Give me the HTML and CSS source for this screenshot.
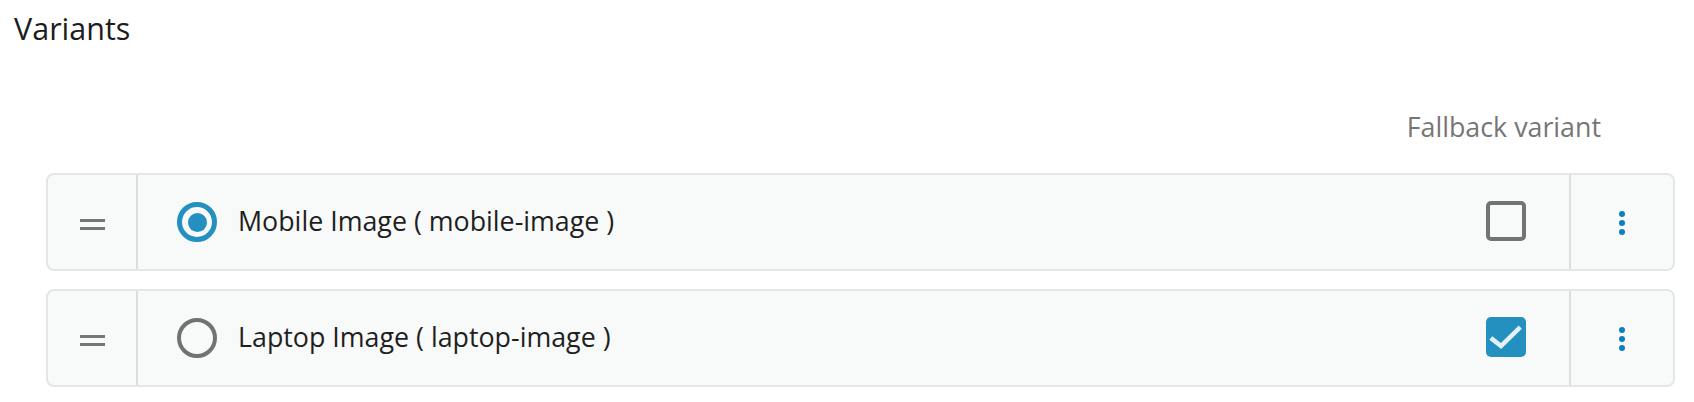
FILE: index.html
```html
<!DOCTYPE html>
<html>
<head>
<meta charset="utf-8">
<link rel="stylesheet" href="styles.css">
</head>
<body>
<div class="page">
  <h2 class="title">Variants</h2>
  <div class="list-head"><span class="fallback-label">Fallback variant</span></div>
  <div class="list">
    <div class="card">
      <div class="handle"><span class="bar"></span><span class="bar"></span></div>
      <div class="divider"></div>
      <div class="main">
        <span class="radio radio-on"><span class="radio-dot"></span></span>
        <span class="label">Mobile Image ( mobile-image )</span>
      </div>
      <div class="check-col"><span class="checkbox"></span></div>
      <div class="divider"></div>
      <div class="menu"><span class="dot"></span><span class="dot"></span><span class="dot"></span></div>
    </div>
    <div class="card">
      <div class="handle"><span class="bar"></span><span class="bar"></span></div>
      <div class="divider"></div>
      <div class="main">
        <span class="radio"></span>
        <span class="label">Laptop Image ( laptop-image )</span>
      </div>
      <div class="check-col">
        <span class="checkbox checkbox-on">
          <svg width="40" height="40" viewBox="0 0 40 40"><path d="M6.5 22.3 L15 29 L32.7 11.7" fill="none" stroke="#e3f1f8" stroke-width="4.5" stroke-linecap="square"/></svg>
        </span>
      </div>
      <div class="divider"></div>
      <div class="menu"><span class="dot"></span><span class="dot"></span><span class="dot"></span></div>
    </div>
  </div>
</div>
</body>
</html>
```
FILE: styles.css
```css
html, body {
  margin: 0;
  padding: 0;
  background: #ffffff;
}
body {
  font-family: "Open Sans", "Liberation Sans", sans-serif;
  color: #1f1f1f;
}
.page {
  padding: 8px 19px 0 14px;
}
.title {
  margin: 0;
  font-size: 30.5px;
  font-weight: 400;
  line-height: 40px;
  color: #1d1d1d;
}
.list-head {
  margin-top: 61px;
  display: flex;
  justify-content: flex-end;
  padding-right: 74px;
}
.fallback-label {
  font-size: 26.8px;
  line-height: 36px;
  color: #767676;
}
.list {
  margin-top: 28px;
  margin-left: 32px;
  display: flex;
  flex-direction: column;
  gap: 18px;
}
.card {
  box-sizing: border-box;
  height: 98px;
  border: 2px solid #e4e6e9;
  border-radius: 8px;
  background: #f8f9f9;
  display: flex;
  align-items: stretch;
}
.handle {
  width: 88px;
  display: flex;
  flex-direction: column;
  align-items: center;
  justify-content: center;
  gap: 5px;
  padding-top: 4px;
  box-sizing: border-box;
}
.bar {
  display: block;
  width: 25px;
  height: 3px;
  background: #767676;
}
.divider {
  width: 2px;
  background: #dcdddf;
}
.main {
  flex: 1;
  display: flex;
  align-items: center;
  padding-left: 39px;
  gap: 21px;
}
.radio {
  box-sizing: border-box;
  width: 40px;
  height: 40px;
  border-radius: 50%;
  border: 4.5px solid #727272;
  display: flex;
  align-items: center;
  justify-content: center;
}
.radio-on {
  border: 5px solid #2490bf;
}
.radio-dot {
  width: 19px;
  height: 19px;
  border-radius: 50%;
  background: #2490bf;
}
.label {
  font-size: 26.8px;
  line-height: 36px;
  color: #1f1f1f;
  margin-bottom: 3px;
}
.check-col {
  display: flex;
  align-items: center;
  padding-right: 43px;
  padding-bottom: 3px;
}
.checkbox {
  box-sizing: border-box;
  width: 40px;
  height: 40px;
  border: 4px solid #737373;
  border-radius: 5px;
  display: block;
}
.checkbox-on {
  border: none;
  background: #2490bf;
}
.checkbox-on svg {
  display: block;
}
.menu {
  width: 102px;
  display: flex;
  flex-direction: column;
  align-items: center;
  justify-content: center;
  gap: 3px;
  padding-top: 2px;
  box-sizing: border-box;
}
.dot {
  display: block;
  width: 6px;
  height: 6px;
  border-radius: 50%;
  background: #0b80c0;
}
```
